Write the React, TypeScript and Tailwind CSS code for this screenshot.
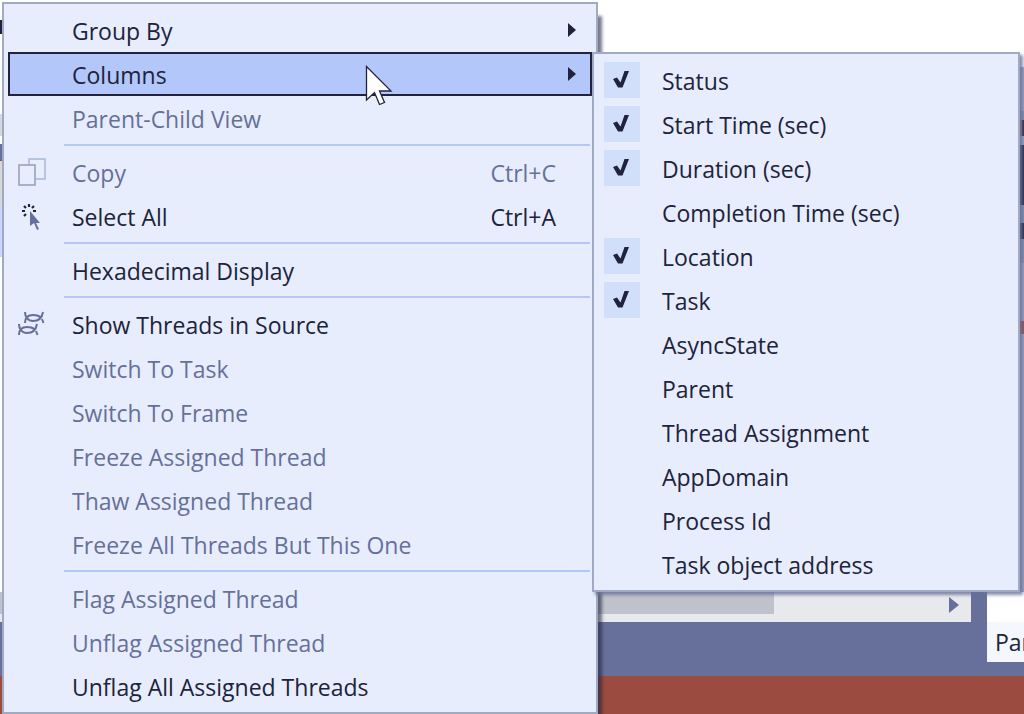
import type { ReactNode } from "react";

type Entry =
  | { kind: "separator" }
  | {
      kind: "item";
      label: string;
      shortcut?: string;
      icon?: ReactNode;
      disabled?: boolean;
      submenu?: boolean;
      active?: boolean;
    };

function CopyIcon() {
  return (
    <svg width="32" height="32" viewBox="0 0 32 32" fill="#e7edfd" aria-hidden="true">
      <rect x="13" y="3" width="16" height="20" stroke="#a8b7dd" strokeWidth="1.5" />
      <rect x="3" y="9" width="16" height="20" stroke="#a0aac3" strokeWidth="1.8" />
    </svg>
  );
}

function SelectAllIcon() {
  return (
    <svg width="32" height="32" viewBox="0 0 32 32" fill="none" aria-hidden="true">
      <path
        d="M13 4v3M8 6l2 2M18 6l-2 2M6 11h3M17 11h3M8 16l2-2"
        stroke="#20233b"
        strokeWidth="2.200"
      />
      <path d="M14 11v15l4-3 3 7 2-1-3-6h4z" fill="#66709a" />
    </svg>
  );
}

function ThreadsIcon() {
  return (
    <svg width="32" height="32" viewBox="0 0 32 32" fill="none" stroke="#66709a" strokeWidth="2" aria-hidden="true">
      <path d="M9 4C9 9 12 13 17 13c5 0 9-3 10-9M9 15c0-5 3-8 8-8 3 0 5 0 7 2M26 11l1.500 4" />
      <path d="M3 16c0 5 3 9 8 9 5 0 9-3 10-9M3 27c0-5 3-8 8-8 3 0 5 0 7 2M20 23l1.500 4" />
    </svg>
  );
}

const entries: Entry[] = [
  { kind: "item", label: "Group By", submenu: true },
  { kind: "item", label: "Columns", submenu: true, active: true },
  { kind: "item", label: "Parent-Child View", disabled: true },
  { kind: "separator" },
  { kind: "item", label: "Copy", shortcut: "Ctrl+C", disabled: true, icon: <CopyIcon /> },
  { kind: "item", label: "Select All", shortcut: "Ctrl+A", icon: <SelectAllIcon /> },
  { kind: "separator" },
  { kind: "item", label: "Hexadecimal Display" },
  { kind: "separator" },
  { kind: "item", label: "Show Threads in Source", icon: <ThreadsIcon /> },
  { kind: "item", label: "Switch To Task", disabled: true },
  { kind: "item", label: "Switch To Frame", disabled: true },
  { kind: "item", label: "Freeze Assigned Thread", disabled: true },
  { kind: "item", label: "Thaw Assigned Thread", disabled: true },
  { kind: "item", label: "Freeze All Threads But This One", disabled: true },
  { kind: "separator" },
  { kind: "item", label: "Flag Assigned Thread", disabled: true },
  { kind: "item", label: "Unflag Assigned Thread", disabled: true },
  { kind: "item", label: "Unflag All Assigned Threads" },
];

const columns = [
  { label: "Status", checked: true },
  { label: "Start Time (sec)", checked: true },
  { label: "Duration (sec)", checked: true },
  { label: "Completion Time (sec)", checked: false },
  { label: "Location", checked: true },
  { label: "Task", checked: true },
  { label: "AsyncState", checked: false },
  { label: "Parent", checked: false },
  { label: "Thread Assignment", checked: false },
  { label: "AppDomain", checked: false },
  { label: "Process Id", checked: false },
  { label: "Task object address", checked: false },
];

function MenuRow({ entry }: { entry: Entry }) {
  if (entry.kind === "separator") {
    return (
      <div role="separator" className="flex h-[10px] items-center pl-14 pr-0.5">
        <div className="h-0.5 w-full bg-[#b3c7fa]" />
      </div>
    );
  }
  return (
    <button
      type="button"
      role="menuitem"
      disabled={entry.disabled}
      className={`flex h-11 w-full items-center border-2 text-left ${
        entry.active ? "border-[#20233b] bg-[#b3c7fa]" : "border-transparent"
      } ${entry.disabled ? "text-[#66709a]" : "text-[#20233b]"}`}
    >
      <span className="flex w-[62px] shrink-0 items-center pl-1.5">{entry.icon}</span>
      <span className="grow whitespace-nowrap pt-0.5">{entry.label}</span>
      {entry.shortcut && <span className="pr-[34px] pt-0.5">{entry.shortcut}</span>}
      {entry.submenu && (
        <svg width="8" height="14" viewBox="0 0 8 14" className="mr-3.5" aria-hidden="true">
          <path d="M0 0l8 7-8 7z" fill="#20233b" />
        </svg>
      )}
    </button>
  );
}

function ColumnRow({ label, checked }: { label: string; checked: boolean }) {
  return (
    <label className="flex h-11 items-center pl-1.5">
      <span className="grid size-9 shrink-0">
        <input
          type="checkbox"
          defaultChecked={checked}
          className="peer col-start-1 row-start-1 size-9 appearance-none checked:bg-[#d2dffb]"
        />
        <svg
          viewBox="0 0 36 36"
          className="pointer-events-none invisible col-start-1 row-start-1 size-9 peer-checked:visible"
          aria-hidden="true"
        >
          <path d="M9 17l4-1.500 3.500 5L20.500 9H25l-6.500 16.500h-4.500z" fill="#20233b" />
        </svg>
      </span>
      <span className="whitespace-nowrap pl-[22px] pt-0.5">{label}</span>
    </label>
  );
}

function Backdrop() {
  return (
    <div className="flex min-h-screen flex-col bg-white">
      <div className="flex h-[592px] justify-between">
        <div className="flex w-1 flex-col">
          <div className="mt-5 h-[14px] bg-[#20233b]" />
          <div className="mt-20 h-[22px] bg-[#d5d8df]" />
          <div className="mt-2 h-4 bg-[#66709a]" />
          <div className="h-[46px] border-t border-[#9c4b41] bg-[#d9d8d8]" />
          <div className="h-[51px] bg-[#c9d7fb]" />
        </div>
        <div className="flex w-1 flex-col bg-white pt-[67px]">
          <div className="h-[44px] bg-[#a0aac3]" />
          <div className="h-[9px] bg-[#8791b0]" />
          <div className="h-4 border-l-2 border-[#b8493d] bg-[#20233b]" />
          <div className="h-[9px] bg-[#a0aac3]" />
          <div className="h-[60px] bg-[#20233b]" />
          <div className="h-[18px] bg-[#8791b0]" />
          <div className="h-4 bg-[#20233b]" />
          <div className="h-6 bg-[#8791b0]" />
          <div className="h-[58px] bg-[#a0aac3]" />
          <div className="h-[13px] bg-[#9c4b41]" />
          <div className="grow bg-[#a0aac3]" />
        </div>
      </div>
      <div className="flex bg-[#66709a]">
        <div className="flex h-[30px] grow items-start bg-[#e8e9ed]">
          <div className="flex w-full items-center">
            <div className="h-[22px] w-[774px] shrink bg-[#bfc2ca]" />
            <div className="grow" />
            <svg width="10" height="16" viewBox="0 0 10 16" className="mr-3 mt-1" aria-hidden="true">
              <path d="M0 0l10 8-10 8z" fill="#66709a" />
            </svg>
          </div>
        </div>
        <div className="ml-4 w-[37px] shrink-0 bg-white" />
      </div>
      <div className="flex h-[54px] justify-end bg-[#66709a]">
        <div className="h-10 w-[37px] overflow-hidden bg-[#f5f7fe] pl-2 pt-1">Par</div>
      </div>
      <div className="grow bg-[#9c4b41]" />
    </div>
  );
}

export default function App() {
  return (
    <div className="relative overflow-hidden font-['Open_Sans','Noto_Sans',sans-serif] text-[23px] leading-8 text-[#20233b]">
      <Backdrop />
      <div
        role="menu"
        aria-label="Tasks"
        className="absolute left-0.5 top-0.5 w-[596px] border-2 border-[#a0aac3] bg-[#e7edfd] p-1 shadow-[4px_14px_3px_#20233b99]"
      >
        {entries.map((entry, index) => (
          <MenuRow key={index} entry={entry} />
        ))}
      </div>
      <div
        role="menu"
        aria-label="Columns"
        className="absolute left-[592px] top-[52px] w-[428px] border-2 border-[#a0aac3] bg-[#e7edfd] py-1 pl-1 shadow-[3px_3px_3px_#66709acc]"
      >
        {columns.map((column) => (
          <ColumnRow key={column.label} label={column.label} checked={column.checked} />
        ))}
      </div>
      <svg
        width="28"
        height="42"
        viewBox="0 0 28 42"
        className="pointer-events-none absolute left-[365px] top-[65px]"
        aria-hidden="true"
      >
        <path
          d="M1.500 1.500V35l8-7.500 5 12 5-2-5-11.500H26z"
          fill="white"
          stroke="#20233b"
          strokeWidth="1.300"
        />
      </svg>
    </div>
  );
}
